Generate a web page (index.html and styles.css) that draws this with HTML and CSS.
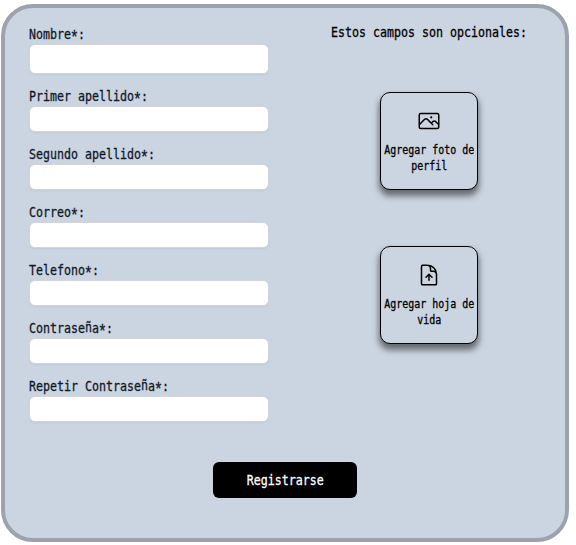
FILE: index.html
```html
<!DOCTYPE html>
<html lang="es">
<head>
<meta charset="utf-8">
<title>Registro</title>
<link rel="stylesheet" href="styles.css">
</head>
<body>
<form class="card">
  <div class="columns">
    <div class="fields">
      <label class="field first"><span class="label">Nombre<i class="star">*</i>:</span><input type="text"></label>
      <label class="field"><span class="label">Primer apellido<i class="star">*</i>:</span><input type="text"></label>
      <label class="field"><span class="label">Segundo apellido<i class="star">*</i>:</span><input type="text"></label>
      <label class="field"><span class="label">Correo<i class="star">*</i>:</span><input type="text"></label>
      <label class="field"><span class="label">Telefono<i class="star">*</i>:</span><input type="text"></label>
      <label class="field"><span class="label">Contrase<i class="tilde">ñ</i>a<i class="star">*</i>:</span><input type="password"></label>
      <label class="field"><span class="label">Repetir Contrase<i class="tilde">ñ</i>a<i class="star">*</i>:</span><input type="password"></label>
    </div>
    <div class="optional">
      <p class="heading"><span>Estos campos son opcionales:</span></p>
      <button type="button" class="upload">
        <svg width="24" height="24" viewBox="0 0 24 24" fill="none" stroke="currentColor" stroke-width="1.5" stroke-linecap="round" stroke-linejoin="round"><path d="m2.25 15.75 5.16-5.16a2.25 2.25 0 0 1 3.18 0l5.16 5.16m-1.5-1.5 1.41-1.41a2.25 2.25 0 0 1 3.18 0l2.91 2.91m-18 3.75h16.5a1.5 1.5 0 0 0 1.5-1.5V6a1.5 1.5 0 0 0-1.5-1.5H3.75A1.5 1.5 0 0 0 2.25 6v12a1.5 1.5 0 0 0 1.5 1.5Zm10.5-11.25h.008v.008h-.008V8.25Zm.375 0a.375.375 0 1 1-.75 0 .375.375 0 0 1 .75 0Z"/></svg>
        <span class="caption">Agregar foto de<br>perfil</span>
      </button>
      <button type="button" class="upload">
        <svg width="24" height="24" viewBox="0 0 24 24" fill="none" stroke="currentColor" stroke-width="1.5" stroke-linecap="round" stroke-linejoin="round"><path d="M19.5 14.25v-2.625a3.375 3.375 0 0 0-3.375-3.375h-1.5A1.125 1.125 0 0 1 13.5 7.125v-1.5a3.375 3.375 0 0 0-3.375-3.375H8.25m6.75 12-3-3m0 0-3 3m3-3v6m-1.5-15H5.625c-.621 0-1.125.504-1.125 1.125v17.25c0 .621.504 1.125 1.125 1.125h12.75c.621 0 1.125-.504 1.125-1.125V11.25a9 9 0 0 0-9-9Z"/></svg>
        <span class="caption">Agregar hoja de<br>vida</span>
      </button>
    </div>
  </div>
  <button type="button" class="submit"><span>Registrarse</span></button>
</form>
</body>
</html>
```

FILE: styles.css
```css
* { box-sizing: border-box; }
body {
  margin: 0;
  background: #fff;
  color: #000;
  font: 14px/20px "DejaVu Sans Mono", monospace;
}
button, input { font: inherit; }
.card {
  width: 568px;
  height: 538px;
  margin: 4px 0 0 1px;
  padding: 16px 24px;
  border: 4px solid #9ca3af;
  border-radius: 32px;
  background: #cbd5e1;
}
.columns { display: flex; height: 438px; }
.fields { width: 240px; display: flex; flex-direction: column; gap: 12px; }
.field { display: block; height: 46px; }
.field.first { height: 50px; }
.label, .heading span, .submit span, .caption {
  display: inline-block;
  white-space: nowrap;
  transform: scaleX(.8305);
  -webkit-text-stroke: .3px currentColor;
}
.label {
  display: block;
  height: 20px;
  color: #111827;
  transform-origin: left;
}
.star, .tilde { font-style: normal; position: relative; }
.star {
  display: inline-block;
  width: 8.43px;
  text-align: center;
  font: 18px/1 "Liberation Sans", sans-serif;
  height: 14px;
  top: 4px;
}
.tilde { top: -1px; }
.field input {
  display: block;
  width: 240px;
  height: 26px;
  border: 1px solid #d1d5db;
  border-radius: 6px;
  background: #fff;
  box-shadow: 0 1px 2px rgba(0, 0, 0, .05);
}
.first input { height: 30px; }
.optional {
  width: 224px;
  margin-left: 48px;
  display: flex;
  flex-direction: column;
  align-items: center;
}
.heading {
  margin: -2px 0 50px;
  display: flex;
  justify-content: center;
}
.upload {
  width: 98px;
  height: 98px;
  margin: 0 0 56px;
  padding: 1px 0 0;
  border: 1px solid #000;
  border-radius: 10px;
  background: #cbd5e1;
  color: #000;
  font-size: 12px;
  line-height: 16px;
  display: flex;
  flex-direction: column;
  align-items: center;
  justify-content: center;
  gap: 9px;
  box-shadow: 0 5px 6px 1px rgba(0, 0, 0, .5);
}
.submit {
  display: flex;
  align-items: center;
  justify-content: center;
  width: 144px;
  height: 36px;
  margin: 0 auto;
  padding: 0;
  border: 0;
  border-radius: 6px;
  background: #000;
  color: #fff;
}
```
